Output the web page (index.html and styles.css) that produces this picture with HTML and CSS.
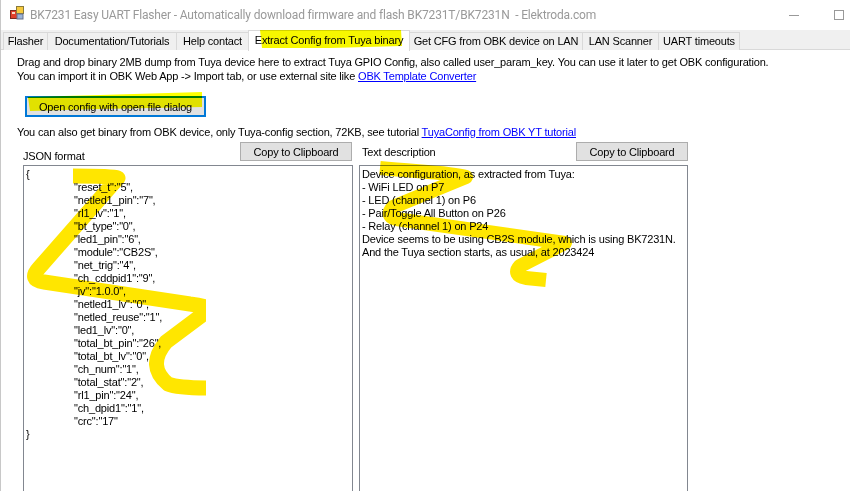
FILE: index.html
```html
<!DOCTYPE html>
<html lang="en">
<head>
<meta charset="utf-8">
<title>BK7231 Easy UART Flasher</title>
<link rel="stylesheet" href="styles.css">
</head>
<body>
<div class="window">
  <header class="titlebar">
    <svg class="app-icon" width="15" height="14" viewBox="0 0 15 14">
      <rect x="0.5" y="4.5" width="7" height="8" fill="#e0402c" stroke="#7a2a20"/>
      <rect x="6.5" y="0.5" width="7" height="7" fill="#f6c93c" stroke="#8a7a3a"/>
      <rect x="7" y="8" width="6" height="5" fill="#9ab4d8" stroke="#66708a"/>
      <rect x="2" y="6" width="3" height="2" fill="#f6d8c8"/>
    </svg>
    <span class="title-text">BK7231 Easy UART Flasher - Automatically download firmware and flash BK7231T/BK7231N  - Elektroda.com</span>
    <div class="controls">
      <span class="ctl-min"></span>
      <span class="ctl-max"></span>
    </div>
  </header>
  <nav class="tabs">
    <span class="tab tab-flasher">Flasher</span>
    <span class="tab tab-docs">Documentation/Tutorials</span>
    <span class="tab tab-help">Help contact</span>
    <span class="tab tab-active">Extract Config from Tuya binary</span>
    <span class="tab tab-cfg">Get CFG from OBK device on LAN</span>
    <span class="tab tab-lan">LAN Scanner</span>
    <span class="tab tab-uart">UART timeouts</span>
  </nav>
  <main class="page">
    <p class="intro">Drag and drop binary 2MB dump from Tuya device here to extract Tuya GPIO Config, also called user_param_key. You can use it later to get OBK configuration.<br>You can import it in OBK Web App -&gt; Import tab, or use external site like <a href="#">OBK Template Converter</a></p>
    <button class="btn btn-open">Open config with open file dialog</button>
    <p class="also">You can also get binary from OBK device, only Tuya-config section, 72KB, see tutorial <a href="#">TuyaConfig from OBK YT tutorial</a></p>
    <div class="panels">
      <section class="panel panel-json">
        <div class="panel-head">
          <span class="label label-json">JSON format</span>
          <button class="btn btn-copy">Copy to Clipboard</button>
        </div>
        <div class="box">
          <div>{</div>
          <div class="in">"reset_t":"5",</div>
          <div class="in">"netled1_pin":"7",</div>
          <div class="in">"rl1_lv":"1",</div>
          <div class="in">"bt_type":"0",</div>
          <div class="in">"led1_pin":"6",</div>
          <div class="in">"module":"CB2S",</div>
          <div class="in">"net_trig":"4",</div>
          <div class="in">"ch_cddpid1":"9",</div>
          <div class="in">"jv":"1.0.0",</div>
          <div class="in">"netled1_lv":"0",</div>
          <div class="in">"netled_reuse":"1",</div>
          <div class="in">"led1_lv":"0",</div>
          <div class="in">"total_bt_pin":"26",</div>
          <div class="in">"total_bt_lv":"0",</div>
          <div class="in">"ch_num":"1",</div>
          <div class="in">"total_stat":"2",</div>
          <div class="in">"rl1_pin":"24",</div>
          <div class="in">"ch_dpid1":"1",</div>
          <div class="in">"crc":"17"</div>
          <div>}</div>
        </div>
      </section>
      <section class="panel panel-text">
        <div class="panel-head">
          <span class="label label-text">Text description</span>
          <button class="btn btn-copy">Copy to Clipboard</button>
        </div>
        <div class="box">
          <div>Device configuration, as extracted from Tuya:</div>
          <div>- WiFi LED on P7</div>
          <div>- LED (channel 1) on P6</div>
          <div>- Pair/Toggle All Button on P26</div>
          <div>- Relay (channel 1) on P24</div>
          <div>Device seems to be using CB2S module, which is using BK7231N.</div>
          <div>And the Tuya section starts, as usual, at 2023424</div>
        </div>
      </section>
    </div>
  </main>
  <svg class="marker" width="850" height="491" viewBox="0 0 850 491">
    <defs>
      <clipPath id="clip-left"><rect x="0" y="0" width="206" height="491"/></clipPath>
    </defs>
    <path fill="#f7f700" d="M260 30 L401 30 L402 46 L330 48 L262 48 Z"/>
    <path fill="#ffff00" d="M28 97 L100 95 L202 92 L202 107 L100 109 L30 111 Z"/>
    <g class="ink" clip-path="url(#clip-left)">
      <path d="M73 176 C90 176 112 176 118 178 L39 268 Q28 280 44 282 L190 304 Q206 306 210 309 L166 342 Q146 366 168 384 Q178 388 210 388"/>
    </g>
    <path class="ink ink-thin" d="M380 168 C420 172 450 172 466 177 L393 207 Q385 216 396 219 L565 243 L520 266 Q512 275 526 278 L546 280"/>
  </svg>
</div>
</body>
</html>
```
FILE: styles.css
```css
* { box-sizing: border-box; }
html, body { margin: 0; padding: 0; }
body {
  width: 850px;
  height: 491px;
  overflow: hidden;
  background: #fff;
  font-family: "Liberation Sans", Arial, sans-serif;
  font-size: 11px;
  letter-spacing: -0.18px;
  color: #000;
}
.window {
  position: relative;
  width: 850px;
  height: 491px;
  overflow: hidden;
  border-left: 1px solid #c8c8c8;
}
.titlebar {
  height: 30px;
  display: flex;
  align-items: center;
  padding-left: 9px;
  background: #fff;
}
.app-icon { flex: none; margin: -4px 5px 0 0; }
.title-text {
  font-family: Roboto, "Noto Sans", sans-serif;
  font-size: 12px;
  letter-spacing: -0.16px;
  color: #999;
  white-space: pre;
}
.controls {
  margin-left: auto;
  display: flex;
  align-items: center;
  padding-right: 6px;
}
.ctl-min { width: 10px; height: 1px; background: #999; margin-right: 35px; }
.ctl-max { width: 10px; height: 10px; border: 1px solid #999; }
.tabs {
  height: 20px;
  display: flex;
  padding: 2px 0 0 3px;
  background: #f0f0f0;
  border-bottom: 1px solid #d9d9d9;
}
.tab {
  height: 18px;
  line-height: 17px;
  text-align: center;
  border: 1px solid #d9d9d9;
  border-bottom: 0;
  margin-left: -1px;
  background: #f0f0f0;
  white-space: nowrap;
}
.tab-flasher { width: 45px; }
.tab-docs { width: 130px; }
.tab-help { width: 73px; }
.tab-active {
  width: 162px;
  height: 21px;
  margin-top: -2px;
  line-height: 18px;
  background: #fff;
  position: relative;
}
.tab-cfg { width: 174px; }
.tab-lan { width: 77px; }
.tab-uart { width: 82px; }
.page { padding: 5px 0 0 16px; }
.intro {
  margin: 0;
  line-height: 14px;
  white-space: nowrap;
}
.also {
  margin: 8px 0 0;
  line-height: 14px;
  white-space: nowrap;
}
a { color: #00f; text-decoration: underline; }
.btn {
  display: block;
  padding: 0;
  font: inherit;
  letter-spacing: inherit;
  color: #000;
  background: #e1e1e1;
  border: 1px solid #adadad;
  border-radius: 0;
}
.btn-open {
  width: 181px;
  height: 21px;
  margin: 13px 0 0 8px;
  border: 2px solid #0078d7;
}
.panels {
  display: grid;
  grid-template-columns: 330px 329px;
  gap: 6px;
  margin: 3px 0 0 6px;
}
.panel-head {
  height: 23px;
  display: flex;
  justify-content: space-between;
  align-items: flex-start;
}
.label { line-height: 14px; }
.label-json { padding-top: 7px; }
.label-text { padding: 3px 0 0 3px; }
.btn-copy { width: 112px; height: 19px; margin-right: 1px; }
.panel-text .btn-copy { margin-right: 0; }
.box {
  height: 330px;
  padding: 2px 2px;
  border: 1px solid #828790;
  line-height: 13px;
  white-space: nowrap;
  background: #fff;
}
.in { padding-left: 48px; }
.marker {
  position: absolute;
  left: -1px;
  top: 0;
  mix-blend-mode: multiply;
  pointer-events: none;
}
.ink {
  fill: none;
  stroke: #ffe600;
  stroke-width: 15;
  stroke-linejoin: round;
}
.ink-thin { stroke-width: 14; }
```
